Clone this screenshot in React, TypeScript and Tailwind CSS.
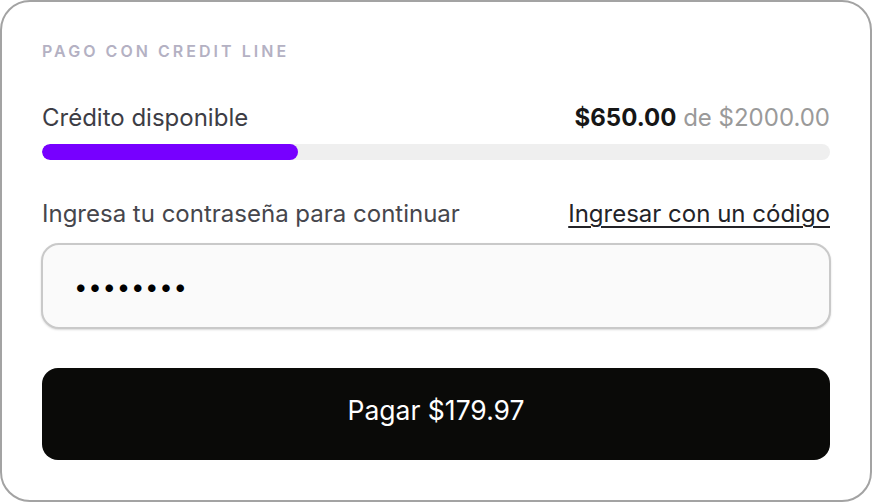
import { useState } from "react";

const available = 650;
const limit = 2000;

const App = () => {
  const [password, setPassword] = useState("12345678");
  const pct = (available / limit) * 100;

  return (
    <div className="w-[872px] h-[502px] bg-white" style={{ fontFamily: "Inter, 'Noto Sans', sans-serif" }}>
      <div className="w-full h-full rounded-[30px] border-2 border-[#a3a3a3] bg-white px-10 pt-10 pb-10 flex flex-col">
        <h3 className="text-[16px] leading-[18px] font-semibold tracking-[0.19em] text-[#b4b1c3] uppercase">
          Pago con Credit Line
        </h3>

        <div className="mt-[44px] flex items-center justify-between h-[28px]">
          <span className="text-[24px] text-[#3d3d45]">Crédito disponible</span>
          <span className="text-[24px]">
            <span className="font-bold text-[#161616]">$650.00</span>
            <span className="text-[#9a9a9a]"> de $2000.00</span>
          </span>
        </div>

        <div className="mt-3 h-4 w-full rounded-full bg-[#efefef] overflow-hidden">
          <div className="h-full rounded-full bg-[#7700ff]" style={{ width: `${pct}%` }} />
        </div>

        <div className="mt-10 flex items-center justify-between h-[28px]">
          <span className="text-[24px] text-[#46464c]">Ingresa tu contraseña para continuar</span>
          <a href="#" className="text-[24px] text-[#232328] underline underline-offset-[4px] decoration-[2px]">
            Ingresar con un código
          </a>
        </div>

        <input
          type="password"
          value={password}
          onChange={(e) => setPassword(e.target.value)}
          className="mt-[15px] -mx-px h-[86px] rounded-[18px] border-2 border-[#c9c9c9] bg-[#fafafa] pl-[31px] text-[24px] tracking-[0.03em] text-black shadow-[0_1px_2px_rgba(0,0,0,0.15)] outline-none"
        />

        <button className="mt-[39px] h-[92px] w-full rounded-[16px] bg-[#0a0a08] pb-[6px] text-white text-[26.5px]">
          Pagar $179.97
        </button>
      </div>
    </div>
  );
};

export default App;
